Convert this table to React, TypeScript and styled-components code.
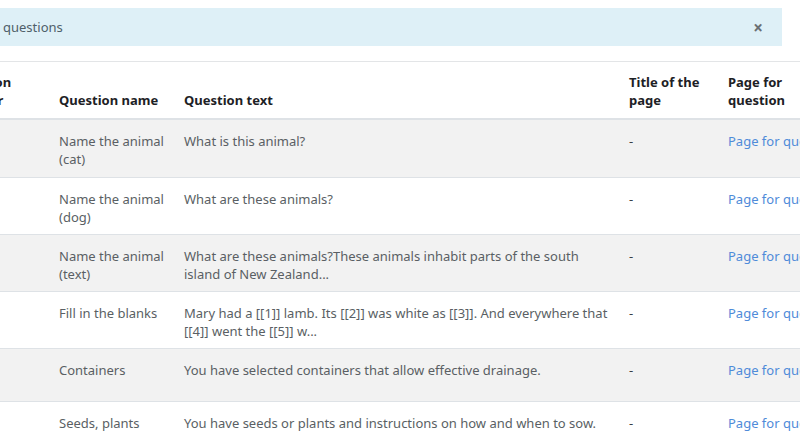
import React from "react";
import styled, { createGlobalStyle } from "styled-components";

const GlobalStyle = createGlobalStyle`
  html, body {
    margin: 0;
    padding: 0;
    background: #ffffff;
    overflow: hidden;
  }
  body {
    font-family: "Noto Sans", "Open Sans", sans-serif;
    font-size: 13px;
    color: #495057;
  }
`;

const Page = styled.div`
  width: 800px;
  height: 445px;
  overflow: hidden;
  padding-top: 8px;
  box-sizing: border-box;
`;

const Alert = styled.div`
  display: flex;
  align-items: center;
  justify-content: space-between;
  width: 782px;
  height: 38px;
  box-sizing: border-box;
  padding: 0 19px 0 3px;
  background: #def0f7;
  color: #4f5f6a;
  font-size: 13px;
`;

const CloseButton = styled.span`
  color: #6a6f73;
  font-size: 17px;
  line-height: 1;
  font-weight: 700;
`;

const TableWrap = styled.div`
  margin-top: 15px;
  margin-left: -60px;
`;

const Table = styled.table`
  border-collapse: collapse;
  table-layout: fixed;
  width: 866px;
`;

const HeadCell = styled.th<{ $w: number }>`
  box-sizing: border-box;
  width: ${(p) => p.$w}px;
  text-align: left;
  vertical-align: bottom;
  padding: 11px 4px 9px 12px;
  line-height: 18px;
  font-weight: 700;
  color: #1d2125;
  border-top: 1px solid #e3e5e7;
  border-bottom: 2px solid #dee2e6;
`;

const Row = styled.tr<{ $striped: boolean; $h: number }>`
  height: ${(p) => p.$h}px;
  background: ${(p) => (p.$striped ? "#f2f2f2" : "#ffffff")};
  border-top: 1px solid #dee2e6;
`;

const Cell = styled.td`
  box-sizing: border-box;
  vertical-align: top;
  padding: 12px 4px 0 12px;
  line-height: 18px;
  color: #5a5f64;
`;

const Dash = styled.span`
  color: #3a3f44;
`;

const PageLink = styled.a`
  color: #4f8bd9;
  text-decoration: none;
  white-space: nowrap;
`;

const rows = [
  { n: 1, h: 58, name: "Name the animal (cat)", text: "What is this animal?" },
  { n: 2, h: 57, name: "Name the animal (dog)", text: "What are these animals?" },
  {
    n: 3,
    h: 57,
    name: "Name the animal (text)",
    text: "What are these animals?These animals inhabit parts of the south island of New Zealand...",
  },
  {
    n: 4,
    h: 57,
    name: "Fill in the blanks",
    text: "Mary had a [[1]] lamb. Its [[2]] was white as [[3]]. And everywhere that [[4]] went the [[5]] w...",
  },
  { n: 5, h: 53, name: "Containers", text: "You have selected containers that allow effective drainage." },
  { n: 6, h: 53, name: "Seeds, plants", text: "You have seeds or plants and instructions on how and when to sow." },
];

export default function App() {
  return (
    <>
      <GlobalStyle />
      <Page>
        <Alert>
          <span>questions</span>
          <CloseButton>×</CloseButton>
        </Alert>
        <TableWrap>
          <Table>
            <thead>
              <tr>
                <HeadCell $w={107}>Question number</HeadCell>
                <HeadCell $w={125}>Question name</HeadCell>
                <HeadCell $w={445}>Question text</HeadCell>
                <HeadCell $w={99}>Title of the page</HeadCell>
                <HeadCell $w={90}>Page for question</HeadCell>
              </tr>
            </thead>
            <tbody>
              {rows.map((r, i) => (
                <Row key={r.n} $striped={i % 2 === 0} $h={r.h}>
                  <Cell>{r.n}</Cell>
                  <Cell>{r.name}</Cell>
                  <Cell>{r.text}</Cell>
                  <Cell>
                    <Dash>-</Dash>
                  </Cell>
                  <Cell>
                    <PageLink href="#">Page for question {r.n}</PageLink>
                  </Cell>
                </Row>
              ))}
            </tbody>
          </Table>
        </TableWrap>
      </Page>
    </>
  );
}
